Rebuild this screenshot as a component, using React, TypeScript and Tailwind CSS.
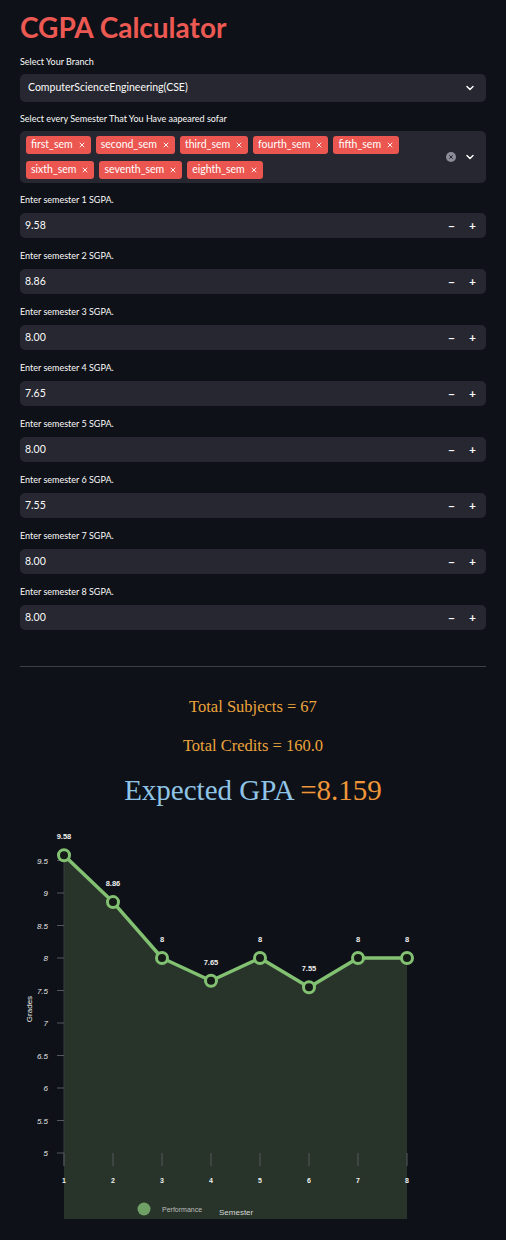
import { ChevronDown, X } from "lucide-react";

const sems = [
  ["first_sem", "second_sem", "third_sem", "fourth_sem", "fifth_sem"],
  ["sixth_sem", "seventh_sem", "eighth_sem"],
];

const grades = [9.58, 8.86, 8.0, 7.65, 8.0, 7.55, 8.0, 8.0];

const px = (i: number) => 64 + i * 49;
const py = (v: number) => 959 - (v - 8) * 65;

function Tag({ label }: { label: string }) {
  return (
    <span className="flex h-[18px] items-center gap-[5px] rounded-[3px] bg-[#ec5651] pl-[5px] pr-[5px] text-[10.5px] text-white">
      {label}
      <X size={8} strokeWidth={3} className="text-white/90" />
    </span>
  );
}

function NumberRow({ n, value }: { n: number; value: string }) {
  return (
    <div className="flex flex-col">
      <label className="h-[14px] text-[9px] leading-[14px] text-[#fafafa]">
        Enter semester {n} SGPA.
      </label>
      <div className="mt-[6px] flex h-[25px] items-center rounded-[5px] bg-[#262730] pl-[5px] pr-[10px] text-[10.5px] text-[#fafafa]">
        <span className="flex-1">{value}</span>
        <span className="flex items-center gap-[14px] text-[12px] font-bold">
          <span>−</span>
          <span>+</span>
        </span>
      </div>
    </div>
  );
}

function Chart() {
  const line = grades.map((g, i) => `${px(i)},${py(g)}`).join(" ");
  const area = `${line} 407,1220 64,1220`;
  const yTicks = [9.5, 9, 8.5, 8, 7.5, 7, 6.5, 6, 5.5, 5];
  return (
    <svg
      width={466}
      height={420}
      viewBox="20 820 466 420"
      className="block"
      style={{ fontFamily: "'Liberation Sans', Arial, sans-serif" }}
    >
      <polygon points={area} fill="#283429" />
      <line x1={64} y1={850} x2={64} y2={1167} stroke="#3b3f44" strokeWidth={1} />
      {yTicks.map((t) => (
        <g key={t}>
          <line x1={57} y1={py(t)} x2={64} y2={py(t)} stroke="#55595e" strokeWidth={1} />
          <text
            x={48}
            y={py(t) + 3}
            textAnchor="end"
            fontSize={8}
            fontStyle="italic"
            fill="#e6e6e6"
          >
            {t}
          </text>
        </g>
      ))}
      {grades.map((_, i) => (
        <g key={i}>
          <line x1={px(i)} y1={1154} x2={px(i)} y2={1167} stroke="#55595e" strokeWidth={1} />
          <text x={px(i)} y={1184} textAnchor="middle" fontSize={7} fontWeight="bold" fill="#f0f0f0">
            {i + 1}
          </text>
        </g>
      ))}
      <polyline
        points={line}
        fill="none"
        stroke="#82c172"
        strokeWidth={3.5}
        strokeLinejoin="round"
      />
      {grades.map((g, i) => (
        <g key={i}>
          <circle cx={px(i)} cy={py(g)} r={5.5} fill="#141a16" stroke="#82c172" strokeWidth={3} />
          <text
            x={px(i)}
            y={py(g) - 16}
            textAnchor="middle"
            fontSize={7.5}
            fontWeight="bold"
            fill="#f0f0f0"
          >
            {g === 8 ? "8" : String(g)}
          </text>
        </g>
      ))}
      <text
        x={32}
        y={1010}
        transform="rotate(-90 32 1010)"
        textAnchor="middle"
        fontSize={8}
        fill="#f0f0f0"
      >
        Grades
      </text>
      <circle cx={144} cy={1210} r={6.5} fill="#6fa065" />
      <text x={162} y={1213} fontSize={7} fill="#bdbdbd">
        Performance
      </text>
      <text x={219} y={1216} fontSize={8} fill="#d6d6d6">
        Semester
      </text>
    </svg>
  );
}

export default function App() {
  return (
    <div
      className="min-h-[1240px] w-full bg-[#0e1117] px-[20px] pt-[10px] text-[#fafafa]"
      style={{ fontFamily: "Lato, 'Open Sans', sans-serif" }}
    >
      <h1 className="h-[34px] text-[28px] font-bold leading-[34px] text-[#ec5953]">
        CGPA Calculator
      </h1>

      <label className="mt-[11px] block h-[14px] text-[9px] leading-[14px]">
        Select Your Branch
      </label>
      <div className="mt-[5px] flex h-[28px] items-center rounded-[5px] bg-[#262730] pl-[8px] pr-[10px] text-[10.5px]">
        <span className="flex-1">ComputerScienceEngineering(CSE)</span>
        <ChevronDown size={12} strokeWidth={3} />
      </div>

      <label className="mt-[10px] block h-[14px] text-[9px] leading-[14px]">
        Select every Semester That You Have aapeared sofar
      </label>
      <div className="mt-[5px] flex h-[52px] items-center rounded-[5px] bg-[#262730] pl-[6px] pr-[10px]">
        <div className="flex w-[410px] flex-col gap-[7px]">
          {sems.map((row, r) => (
            <div key={r} className="flex gap-[5px]">
              {row.map((s) => (
                <Tag key={s} label={s} />
              ))}
            </div>
          ))}
        </div>
        <div className="ml-auto flex items-center gap-[8px]">
          <span className="flex h-[10px] w-[10px] items-center justify-center rounded-full bg-[#8b8d98]">
            <X size={6} strokeWidth={4} className="text-[#262730]" />
          </span>
          <ChevronDown size={12} strokeWidth={3} />
        </div>
      </div>

      <div className="mt-[10px] flex flex-col gap-[11px]">
        {grades.map((g, i) => (
          <NumberRow key={i} n={i + 1} value={g.toFixed(2)} />
        ))}
      </div>

      <hr className="mt-[36px] border-0 border-t border-[#3d3f47]" />

      <div
        className="flex flex-col items-center"
        style={{ fontFamily: "'Liberation Serif', 'DejaVu Serif', serif" }}
      >
        <p className="mt-[30px] h-[20px] text-[16.5px] leading-[20px] text-[#eca43c]">
          Total Subjects = 67
        </p>
        <p className="mt-[19px] h-[20px] text-[16.5px] leading-[20px] text-[#eca43c]">
          Total Credits = 160.0
        </p>
        <p className="mt-[19px] h-[30px] text-[29px] leading-[30px]">
          <span className="text-[#8fc4e6]">Expected GPA </span>
          <span className="text-[#f0963a]">=8.159</span>
        </p>
      </div>

      <div className="mt-[14px]">
        <Chart />
      </div>
    </div>
  );
}
